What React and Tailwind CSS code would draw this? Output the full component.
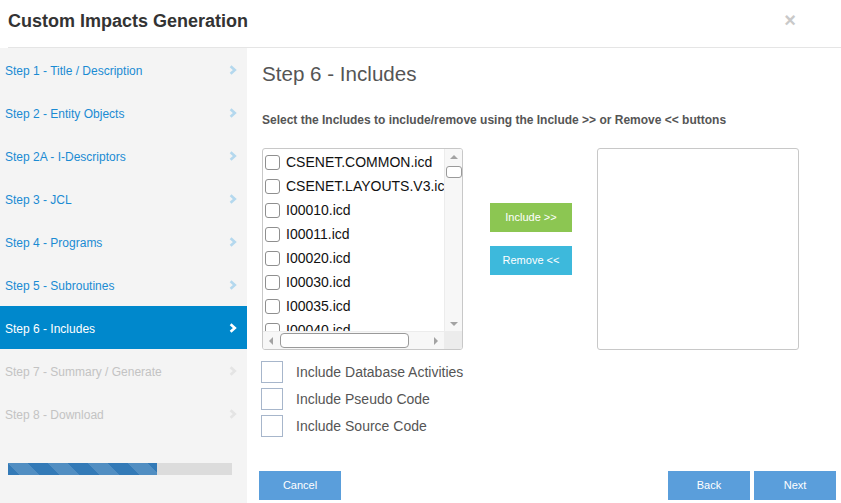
import React from "react";

const steps = [
  { label: "Step 1 - Title / Description", state: "done" },
  { label: "Step 2 - Entity Objects", state: "done" },
  { label: "Step 2A - I-Descriptors", state: "done" },
  { label: "Step 3 - JCL", state: "done" },
  { label: "Step 4 - Programs", state: "done" },
  { label: "Step 5 - Subroutines", state: "done" },
  { label: "Step 6 - Includes", state: "active" },
  { label: "Step 7 - Summary / Generate", state: "disabled" },
  { label: "Step 8 - Download", state: "disabled" },
];

const files = [
  "CSENET.COMMON.icd",
  "CSENET.LAYOUTS.V3.icd",
  "I00010.icd",
  "I00011.icd",
  "I00020.icd",
  "I00030.icd",
  "I00035.icd",
  "I00040.icd",
  "I00045.icd",
  "I00050.icd",
];

function Chevron({ color }) {
  return (
    <svg width="8" height="10" viewBox="0 0 8 10" className="shrink-0">
      <path d="M1.6 1.2 L5.8 5 L1.6 8.8" fill="none" stroke={color} strokeWidth="2.6" strokeLinecap="butt" strokeLinejoin="miter" />
    </svg>
  );
}

function Tri({ dir }) {
  const d = {
    up: "M0 5 L4 1 L8 5 Z",
    down: "M0 1 L8 1 L4 5 Z",
    left: "M5 0 L5 8 L1 4 Z",
    right: "M1 0 L1 8 L5 4 Z",
  }[dir];
  const vert = dir === "up" || dir === "down";
  return (
    <svg width={vert ? 8 : 6} height={vert ? 6 : 8} viewBox={vert ? "0 0 8 6" : "0 0 6 8"}>
      <path d={d} fill="#a3a3a3" />
    </svg>
  );
}

export default function App() {
  return (
    <div className="w-[841px] h-[503px] bg-white flex flex-col overflow-hidden font-['Liberation_Sans',Arial,sans-serif]">
      {/* Header */}
      <div className="h-[48px] shrink-0 ml-[8px] flex items-center justify-between pr-[45px] border-b border-[#e5e5e5]">
        <h1 className="text-[18px] leading-[22px] font-bold text-[#333] -mt-[6px]">Custom Impacts Generation</h1>
        <span className="text-[20px] leading-[20px] font-bold text-[#c9c9c9] -mt-[8px]">×</span>
      </div>

      <div className="flex flex-1 min-h-0">
        {/* Sidebar */}
        <div className="w-[247px] shrink-0 bg-[#f4f4f4] flex flex-col">
          {steps.map((s) => {
            const active = s.state === "active";
            const disabled = s.state === "disabled";
            return (
              <div
                key={s.label}
                className={
                  "h-[43px] flex items-center justify-between pl-[5px] pr-[10px] text-[12px] " +
                  (active ? "bg-[#0088cc] text-white" : disabled ? "text-[#c3c3c3]" : "text-[#1a8bd3]")
                }
              >
                <span className="pt-[2px]">{s.label}</span>
                <Chevron color={active ? "#ffffff" : disabled ? "#e4e4e4" : "#b4d8ee"} />
              </div>
            );
          })}
          <div className="mt-[28px] ml-[8px] w-[224px] h-[12px] bg-[#dcdcdc] flex">
            <div className="w-[149px] h-full bg-[#337ab7] bg-[linear-gradient(45deg,rgba(255,255,255,.15)_25%,transparent_25%,transparent_50%,rgba(255,255,255,.15)_50%,rgba(255,255,255,.15)_75%,transparent_75%,transparent)] bg-[length:40px_40px]" />
          </div>
        </div>

        {/* Main */}
        <div className="flex-1 flex flex-col pl-[15px] pr-[5px] pb-[3px]">
          <h2 className="mt-[14px] text-[20.6px] leading-[24px] text-[#555]">Step 6 - Includes</h2>
          <p className="mt-[27px] text-[12px] leading-[14px] font-bold text-[#555]">
            Select the Includes to include/remove using the Include &gt;&gt; or Remove &lt;&lt; buttons
          </p>

          <div className="mt-[21px] flex items-start">
            {/* Listbox */}
            <div className="w-[201px] h-[202px] border border-[#c8c8c8] rounded-[3px] flex flex-col overflow-hidden">
              <div className="flex flex-1 min-h-0">
                <div className="flex-1 min-w-0 overflow-hidden pt-[1px]">
                  {files.map((f) => (
                    <div key={f} className="h-[24px] flex items-center pl-[2px] whitespace-nowrap">
                      <span className="w-[15px] h-[15px] shrink-0 rounded-[3px] border border-[#8f8f8f] bg-white" />
                      <span className="ml-[6px] text-[14px] text-[#111]">{f}</span>
                    </div>
                  ))}
                </div>
                <div className="w-[18px] shrink-0 bg-[#f7f7f7] border-l border-[#ececec] flex flex-col items-center pt-[5px] pb-[4px]">
                  <Tri dir="up" />
                  <div className="mt-[6px] w-[16px] h-[12px] rounded-[3px] border border-[#9a9a9a] bg-white" />
                  <div className="flex-1" />
                  <Tri dir="down" />
                </div>
              </div>
              <div className="h-[18px] shrink-0 flex">
                <div className="flex-1 bg-[#f7f7f7] border-t border-[#ececec] flex items-center pl-[5px] pr-[5px]">
                  <Tri dir="left" />
                  <div className="ml-[6px] w-[129px] h-[15px] rounded-[4px] border border-[#9a9a9a] bg-white" />
                  <div className="flex-1" />
                  <Tri dir="right" />
                </div>
                <div className="w-[18px] bg-[#ececec]" />
              </div>
            </div>

            {/* Buttons */}
            <div className="ml-[27px] mt-[55px] flex flex-col gap-[14px]">
              <button className="w-[82px] h-[29px] bg-[#8cc652] text-white text-[11px]">Include &gt;&gt;</button>
              <button className="w-[82px] h-[29px] bg-[#3db9dc] text-white text-[11px]">Remove &lt;&lt;</button>
            </div>

            {/* Right box */}
            <div className="ml-[25px] w-[202px] h-[202px] border border-[#c8c8c8] rounded-[3px]" />
          </div>

          <div className="mt-[11px] -ml-px flex flex-col gap-[5px]">
            {["Include Database Activities", "Include Pseudo Code", "Include Source Code"].map((l) => (
              <div key={l} className="flex items-center h-[22px]">
                <span className="w-[22px] h-[22px] border border-[#a7b6cb] bg-white shrink-0" />
                <span className="ml-[13px] text-[14px] text-[#555]">{l}</span>
              </div>
            ))}
          </div>

          <div className="mt-auto -ml-[3px] flex items-center">
            <button className="w-[82px] h-[29px] bg-[#5a9edb] text-white text-[11px]">Cancel</button>
            <div className="flex-1" />
            <button className="w-[82px] h-[29px] bg-[#5a9edb] text-white text-[11px]">Back</button>
            <button className="ml-[4px] w-[82px] h-[29px] bg-[#5a9edb] text-white text-[11px]">Next</button>
          </div>
        </div>
      </div>
    </div>
  );
}
